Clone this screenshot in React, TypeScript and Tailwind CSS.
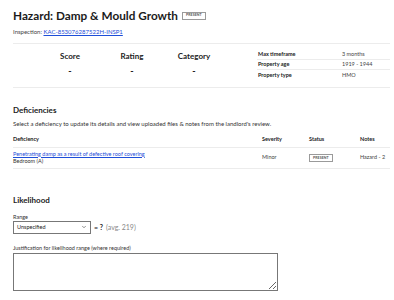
import { ChevronDown } from "lucide-react"

function Badge() {
    return (
        <span className="inline-flex h-[8px] items-center border border-[#9a9a9a] px-[3px] text-[3.5px] font-bold uppercase leading-none tracking-wide text-[#555]">
            Present
        </span>
    )
}

function Stat({ label }: { label: string }) {
    return (
        <div className="flex w-[62px] flex-col items-center">
            <div className="text-[8px] font-bold leading-[10px] text-[#222]">{label}</div>
            <div className="mt-[5px] text-[9px] font-bold leading-none text-[#222]">-</div>
        </div>
    )
}

function InfoRow({ label, value, last }: { label: string; value: string; last?: boolean }) {
    return (
        <div className={`flex h-[10.5px] items-center text-[5.5px] ${last ? "" : "border-b border-[#ececec]"}`}>
            <div className="w-[85px] pl-[1px] font-bold">{label}</div>
            <div className="text-[#444]">{value}</div>
        </div>
    )
}

export default function App() {
    return (
        <div
            className="min-h-[300px] bg-white pl-[13px] pr-[4px] pt-[6px] text-[#222]"
            style={{ fontFamily: "Lato, 'Open Sans', sans-serif" }}
        >
            {/* HEADER */}
            <div className="flex items-center gap-[4px]">
                <h1 className="text-[11.75px] font-bold leading-[20px] text-[#1b1b1b]">
                    Hazard: Damp &amp; Mould Growth
                </h1>
                <Badge />
            </div>
            <div className="mt-[1px] text-[6px] leading-[10px] text-[#444]">
                Inspection:{" "}
                <a href="#" className="text-[#1d4ed8] underline">
                    KAC-853076287522H-INSP1
                </a>
            </div>

            {/* SUMMARY */}
            <div className="mt-[6px] flex border-y border-[#ececec] pb-[6px]">
                <div className="flex flex-1 justify-center pt-[7px] pr-[6px]">
                    <Stat label="Score" />
                    <Stat label="Rating" />
                    <Stat label="Category" />
                </div>
                <div className="w-[133px] pt-[5px]">
                    <InfoRow label="Max timeframe" value="3 months" />
                    <InfoRow label="Property age" value="1919 - 1944" />
                    <InfoRow label="Property type" value="HMO" last />
                </div>
            </div>

            {/* DEFICIENCIES */}
            <h2 className="mt-[16px] text-[8px] font-bold leading-[12px]">Deficiencies</h2>
            <p className="mt-[3px] text-[6px] leading-[9px] text-[#333]">
                Select a deficiency to update its details and view uploaded files &amp; notes from the landlord's review.
            </p>
            <table className="mt-[7px] w-full text-[5.5px]">
                <thead>
                    <tr className="border-b border-[#ececec] text-left">
                        <th className="pb-[4px] font-bold leading-[8px]">Deficiency</th>
                        <th className="w-[47px] pb-[4px] font-bold leading-[8px]">Severity</th>
                        <th className="w-[51px] pb-[4px] font-bold leading-[8px]">Status</th>
                        <th className="w-[30px] pb-[4px] font-bold leading-[8px]">Notes</th>
                    </tr>
                </thead>
                <tbody>
                    <tr className="border-b border-[#ececec]">
                        <td className="pb-[3px] pt-[3px] leading-[7px]">
                            <a href="#" className="text-[#1d4ed8] underline">
                                Penetrating damp as a result of defective roof covering
                            </a>
                            <div className="text-[#333]">Bedroom (A)</div>
                        </td>
                        <td className="text-[#444]">Minor</td>
                        <td>
                            <Badge />
                        </td>
                        <td className="text-[#444]">Hazard - 2</td>
                    </tr>
                </tbody>
            </table>

            {/* LIKELIHOOD */}
            <h2 className="mt-[25px] text-[8px] font-bold leading-[12px]">Likelihood</h2>
            <div className="mt-[7px] text-[5.5px] leading-[8px] text-[#333]">Range</div>
            <div className="flex items-center gap-[3px]">
                <div className="flex h-[13px] w-[78px] items-center justify-between border border-[#777] px-[3px] text-[5.5px] text-[#222]">
                    <span>Unspecified</span>
                    <ChevronDown className="h-[6px] w-[6px]" strokeWidth={2} />
                </div>
                <span className="text-[7px] font-bold">= ?</span>
                <span className="text-[7px] text-[#888]">(avg. 219)</span>
            </div>
            <div className="mt-[10px] text-[5.5px] leading-[8px] text-[#333]">
                Justification for likelihood range (where required)
            </div>
            <textarea className="mt-[1px] block h-[38px] w-[265px] resize-y border border-[#777]" />
        </div>
    )
}
